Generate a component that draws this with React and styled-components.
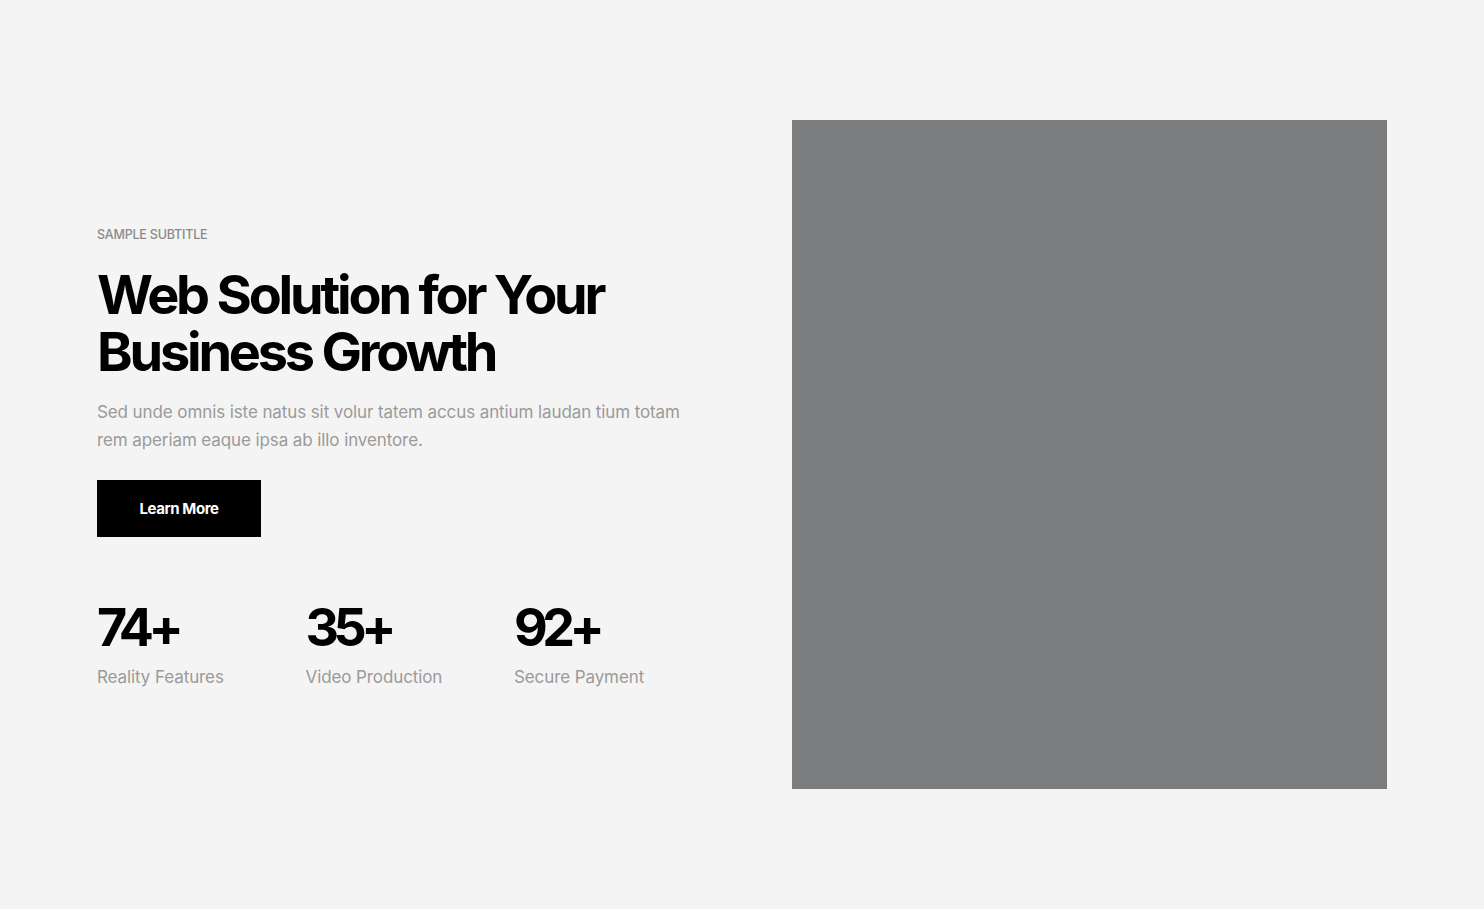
import styled, { createGlobalStyle } from "styled-components";

const GlobalStyle = createGlobalStyle`
  * { box-sizing: border-box; }
  html, body {
    margin: 0;
    padding: 0;
    background: #f4f4f4;
    font-family: Inter, "Noto Sans", sans-serif;
  }
`;

const stats = [
  { value: "74+", label: "Reality Features" },
  { value: "35+", label: "Video Production" },
  { value: "92+", label: "Secure Payment" },
];

function App() {
  return (
    <>
      <GlobalStyle />
      <StyledHero>
        <div className="Content">
          <span className="Subtitle">Sample Subtitle</span>
          <h1>
            Web Solution for Your
            <br />
            Business Growth
          </h1>
          <p>
            Sed unde omnis iste natus sit volur tatem accus antium laudan tium
            totam rem aperiam eaque ipsa ab illo inventore.
          </p>
          <Button>Learn More</Button>
          <Stats>
            {stats.map((s) => (
              <Stat key={s.label}>
                <strong>{s.value}</strong>
                <span>{s.label}</span>
              </Stat>
            ))}
          </Stats>
        </div>
        <Picture />
      </StyledHero>
    </>
  );
}

const StyledHero = styled.section`
  height: 909px;
  padding: 120px 97px 120px 97px;
  display: grid;
  grid-template-columns: 1fr 595px;
  align-items: center;

  .Content {
    display: flex;
    flex-direction: column;
    align-items: flex-start;
    padding-top: 4px;
  }

  .Subtitle {
    font-size: 12.5px;
    text-transform: uppercase;
    color: #8a8a8a;
    font-weight: 500;
    letter-spacing: -0.2px;
    line-height: 16px;
  }

  h1 {
    margin: 23px 0 0;
    font-size: 54px;
    line-height: 57px;
    font-weight: 700;
    letter-spacing: -3.2px;
    color: #000;
  }

  p {
    margin: 18px 0 0;
    font-size: 17px;
    line-height: 28px;
    color: #9a9a9a;
    letter-spacing: -0.1px;
    max-width: 600px;
  }
`;

const Button = styled.button`
  margin-top: 26px;
  width: 164px;
  height: 57px;
  border: none;
  background: #000;
  color: #fff;
  font-family: inherit;
  font-size: 15px;
  font-weight: 700;
  letter-spacing: -0.4px;
  cursor: pointer;
`;

const Stats = styled.div`
  margin-top: 64px;
  display: flex;
`;

const Stat = styled.div`
  width: 208.5px;
  display: flex;
  flex-direction: column;

  strong {
    font-size: 52px;
    line-height: 54px;
    font-weight: 700;
    letter-spacing: -5.5px;
    color: #000;
  }

  span {
    margin-top: 12px;
    font-size: 17px;
    color: #9a9a9a;
    letter-spacing: -0.1px;
  }
`;

const Picture = styled.div`
  width: 595px;
  height: 669px;
  background: #7b7c7d;
`;

export default App;
